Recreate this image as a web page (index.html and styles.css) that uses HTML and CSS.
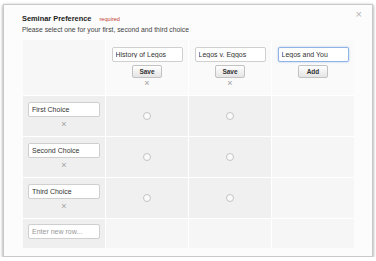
FILE: index.html
```html
<!DOCTYPE html>
<html>
<head>
<meta charset="utf-8">
<link rel="stylesheet" href="styles.css">
</head>
<body>
<div class="dialog">
  <span class="close">×</span>
  <div class="head">
    <div class="title-line"><span class="title">Seminar Preference</span><span class="req">required</span></div>
    <div class="sub">Please select one for your first, second and third choice</div>
  </div>
  <div class="grid">
    <div class="cell h1"></div>
    <div class="cell hc">
      <input class="field" value="History of Legos">
      <button class="btn">Save</button>
      <span class="x">×</span>
    </div>
    <div class="cell hc">
      <input class="field" value="Legos v. Eggos">
      <button class="btn">Save</button>
      <span class="x">×</span>
    </div>
    <div class="cell hc">
      <input class="field focus" value="Legos and You">
      <button class="btn">Add</button>
    </div>

    <div class="cell rl">
      <input class="field row" value="First Choice">
      <span class="x">×</span>
    </div>
    <div class="cell rc"><span class="radio"></span></div>
    <div class="cell rc"><span class="radio"></span></div>
    <div class="cell re"></div>

    <div class="cell rl">
      <input class="field row" value="Second Choice">
      <span class="x">×</span>
    </div>
    <div class="cell rc"><span class="radio"></span></div>
    <div class="cell rc"><span class="radio"></span></div>
    <div class="cell re"></div>

    <div class="cell rl">
      <input class="field row" value="Third Choice">
      <span class="x">×</span>
    </div>
    <div class="cell rc"><span class="radio"></span></div>
    <div class="cell rc"><span class="radio"></span></div>
    <div class="cell re"></div>

    <div class="cell rl last">
      <input class="field row" placeholder="Enter new row...">
    </div>
    <div class="cell re"></div>
    <div class="cell re"></div>
    <div class="cell re"></div>
  </div>
</div>
</body>
</html>
```
FILE: styles.css
```css
html, body {
  margin: 0;
  padding: 0;
  background: #fff;
}
body {
  font-family: "Liberation Sans", Arial, sans-serif;
  color: #333;
}
.dialog {
  position: relative;
  margin: 4px 0 0 3px;
  width: 368px;
  height: 251px;
  border: 1px solid #c9c9c9;
  background: #fcfcfc;
  box-shadow: 0 1px 3px rgba(0, 0, 0, 0.45);
  box-sizing: content-box;
}
.close {
  position: absolute;
  right: 10px;
  top: 3px;
  font-size: 11px;
  color: #b5b5b5;
}
.head {
  padding: 9px 0 0 18px;
  height: 25px;
  box-sizing: border-box;
}
.title-line {
  height: 10px;
  line-height: 10px;
  display: flex;
  align-items: baseline;
}
.title {
  font-weight: bold;
  font-size: 7.4px;
  color: #222;
}
.req {
  margin-left: 8px;
  font-size: 5.6px;
  color: #c0392b;
}
.sub {
  margin-top: 1px;
  font-size: 6.8px;
  line-height: 9px;
  color: #444;
}
.grid {
  margin: 10px 0 0 19px;
  display: grid;
  grid-template-columns: 82px 82px 82px 82px;
  grid-template-rows: 55px 40px 40px 40px 29px;
  gap: 1px;
  width: 331px;
  background: #fff;
}
.cell {
  display: flex;
  flex-direction: column;
  align-items: center;
}
.h1 { background: #f7f7f7; }
.hc {
  background: #fafafa;
  padding-top: 7px;
}
.rl {
  background: #efefef;
  padding-top: 6px;
}
.rl.last { padding-top: 5px; }
.rc {
  background: #f0f0f0;
  justify-content: center;
}
.re { background: #f6f6f6; }
.field {
  box-sizing: border-box;
  width: 71px;
  height: 15px;
  margin: 0;
  padding: 0 3px;
  border: 1px solid #cfcfcf;
  border-radius: 2px;
  background: #fff;
  font-family: "Liberation Sans", Arial, sans-serif;
  font-size: 7px;
  color: #333;
  outline: none;
}
.field.row {
  width: 72px;
}
.field::placeholder {
  color: #999;
}
.field.focus {
  border-color: #8fb3e6;
  box-shadow: 0 0 2px rgba(82, 140, 230, 0.5);
}
.btn {
  box-sizing: border-box;
  margin-top: 3px;
  width: 30px;
  height: 13px;
  padding: 0;
  border: 1px solid #c2c2c2;
  border-radius: 2px;
  background: linear-gradient(#ffffff, #e4e4e4);
  font-family: "Liberation Sans", Arial, sans-serif;
  font-weight: bold;
  font-size: 6.5px;
  color: #333;
}
.x {
  margin-top: 0;
  font-size: 9px;
  line-height: 10px;
  color: #a0a0a0;
}
.rl .x {
  margin-top: 2px;
}
.radio {
  width: 6px;
  height: 6px;
  border: 1px solid #c4c4c4;
  border-radius: 50%;
  background: #fafafa;
}
```
